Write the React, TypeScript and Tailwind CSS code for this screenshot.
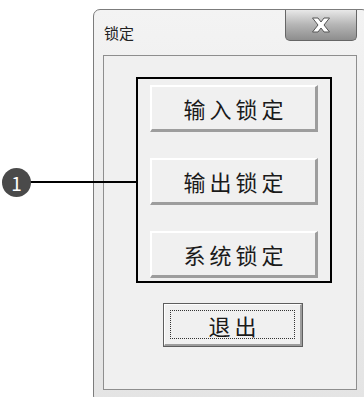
import React from 'react';

const font = { fontFamily: '"Noto Sans CJK SC", "Noto Sans", sans-serif' };

function LockButton({ label }: { label: string }) {
  return (
    <button
      className="w-[168px] h-[47px] flex items-center justify-center bg-[#f0f0f0] border-t-2 border-l-2 border-t-white border-l-white border-b-[3px] border-r-[3px] border-b-[#9d9d9d] border-r-[#9d9d9d] text-[22px] tracking-[4px] text-[#1a1a1a] leading-none"
    >
      <span className="pl-[4px]">{label}</span>
    </button>
  );
}

function CloseButton() {
  return (
    <div className="w-[72px] h-[31px] rounded-b-[5px] border border-t-0 border-[#666] bg-gradient-to-b from-[#e8e8e8] via-[#b4b4b4] to-[#8e8e8e] flex items-center justify-center">
      <svg width="24" height="16" viewBox="0 0 24 16">
        <path
          d="M3.5 1 H9 L12 5 L15 1 H20.5 L15 8 L20.5 15 H15 L12 11 L9 15 H3.5 L9 8 Z"
          fill="#ffffff"
          stroke="#555"
          strokeWidth="1"
          strokeLinejoin="round"
        />
      </svg>
    </div>
  );
}

export default function App() {
  return (
    <div className="relative w-[364px] h-[397px] overflow-hidden bg-white" style={font}>
      {/* Window */}
      <div className="ml-[93px] mt-[9px] w-[276px] h-[394px] rounded-[7px] border border-[#7c7c7c] bg-gradient-to-b from-[#f3f3f3] to-[#e4e4e4] flex flex-col">
        {/* Title bar */}
        <div className="h-[45px] flex items-start pl-[10px] pr-[11px]">
          <span className="mt-[15px] text-[15px] leading-none text-[#222]">锁定</span>
          <div className="ml-auto">
            <CloseButton />
          </div>
        </div>

        {/* Client area */}
        <div className="ml-[9px] w-[254px] h-[335px] border border-[#8e8e8e] bg-[#f0f0f0] flex flex-col">
          {/* Group */}
          <div className="ml-[32px] mt-[21px] w-[196px] h-[206px] border-2 border-black flex flex-col items-center pt-[6px] gap-[26px]">
            <LockButton label="输入锁定" />
            <LockButton label="输出锁定" />
            <LockButton label="系统锁定" />
          </div>

          {/* Exit */}
          <div className="ml-[59px] mt-[20px] w-[140px] h-[44px] border border-[#5e5e5e] bg-[#f0f0f0]">
            <div className="w-full h-full border-t border-l border-t-white border-l-white border-b-2 border-r-2 border-b-[#9d9d9d] border-r-[#9d9d9d] p-[5px]">
              <div className="w-full h-full border border-dotted border-[#333] flex items-center justify-center text-[22px] tracking-[4px] leading-none text-[#1a1a1a]">
                <span className="pl-[4px]">退出</span>
              </div>
            </div>
          </div>
        </div>
      </div>

      {/* Callout */}
      <div className="absolute left-[30px] top-[181px] w-[107px] h-[2px] bg-black" />
      <div className="absolute left-[2px] top-[168px] w-[29px] h-[29px] rounded-full bg-[#4a4a4a] flex items-center justify-center text-white text-[19px] leading-none">
        1
      </div>
    </div>
  );
}
